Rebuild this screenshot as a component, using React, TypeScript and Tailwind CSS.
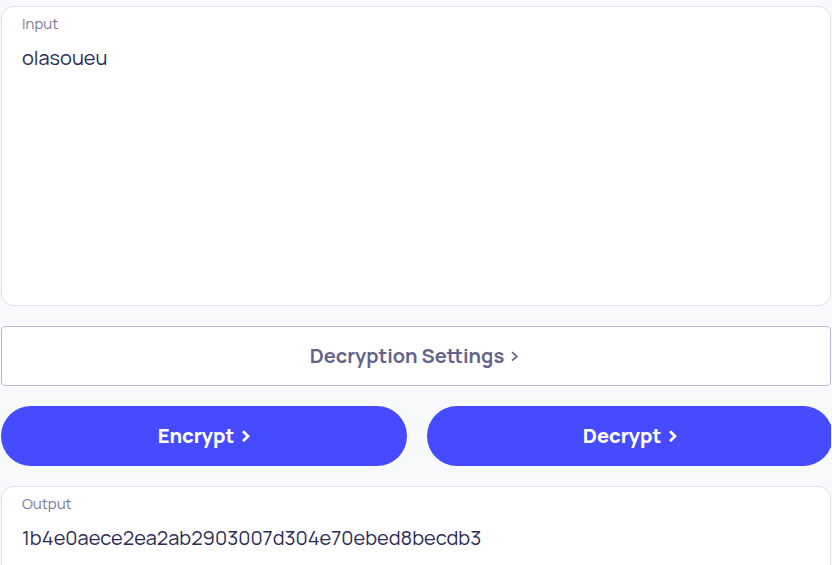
import { useState } from "react";

type FieldProps = {
  id: string;
  label: string;
  value: string;
  onChange?: (value: string) => void;
};

function Field({ id, label, value, onChange }: FieldProps) {
  return (
    <div className="flex h-[300px] shrink-0 flex-col rounded-xl border border-[#e0e0ef] bg-white px-5 pt-1">
      <label htmlFor={id} className="text-[15px] leading-[26px] font-normal text-[#7a789d]">
        {label}
      </label>
      <textarea
        id={id}
        value={value}
        readOnly={!onChange}
        spellCheck={false}
        onChange={(event) => onChange?.(event.target.value)}
        className="mt-1 w-full flex-1 resize-none bg-transparent text-xl leading-[34px] font-normal text-[#2c2b57] outline-none"
      />
    </div>
  );
}

function ThinChevron() {
  return (
    <svg
      viewBox="0 0 12 12"
      className="size-3"
      fill="none"
      stroke="currentColor"
      strokeWidth={1.7}
      aria-hidden="true"
    >
      <path d="M2 2.2 6.8 6.4 2 10.6" />
    </svg>
  );
}

function BoldChevron() {
  return (
    <svg
      viewBox="0 0 10 12"
      className="h-3 w-2.5"
      fill="none"
      stroke="currentColor"
      strokeWidth={2.7}
      aria-hidden="true"
    >
      <path d="M3 1.2 8 6.2 3 11.2" />
    </svg>
  );
}

function ActionButton({ children }: { children: string }) {
  return (
    <button
      type="button"
      className="flex h-[60px] flex-1 items-center justify-center gap-1.5 rounded-full bg-[#464bff] text-xl font-extrabold text-white"
    >
      {children}
      <BoldChevron />
    </button>
  );
}

export default function App() {
  const [input, setInput] = useState("olasoueu");

  return (
    <main className="flex h-screen flex-col gap-5 overflow-hidden bg-[#f8f9fb] px-px pt-1.5 font-['Manrope','Inter',sans-serif]">
      <Field id="input" label="Input" value={input} onChange={setInput} />
      <button
        type="button"
        className="flex h-[60px] shrink-0 items-center justify-center gap-1.5 rounded border border-[#b9b8dc] bg-white text-xl font-bold text-[#65638c]"
      >
        Decryption Settings
        <ThinChevron />
      </button>
      <div className="shrink-0 overflow-hidden">
        <div className="-mr-0.5 flex gap-5">
          <ActionButton>Encrypt</ActionButton>
          <ActionButton>Decrypt</ActionButton>
        </div>
      </div>
      <Field id="output" label="Output" value="1b4e0aece2ea2ab2903007d304e70ebed8becdb3" />
    </main>
  );
}
